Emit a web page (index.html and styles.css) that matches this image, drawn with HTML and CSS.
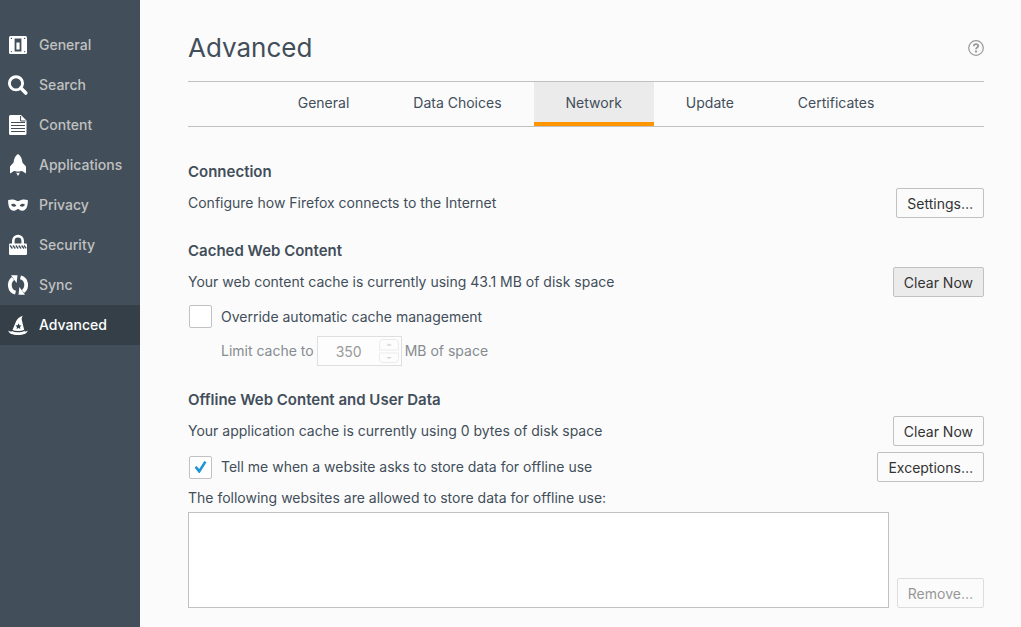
FILE: index.html
```html
<!DOCTYPE html>
<html lang="en">
<head>
<meta charset="utf-8">
<meta name="viewport" content="width=device-width, initial-scale=1">
<title>Advanced preferences</title>
<link rel="stylesheet" href="styles.css">
</head>
<body class="prefs">
<nav class="sidebar" aria-label="Categories">
  <a class="category" href="#general">
    <svg class="category-icon" viewBox="0 0 20 20"><rect x="1" y="1" width="18" height="18" rx="1.5" fill="#fff"/><path d="M7.5 4.500h5v11h-5z" fill="none" stroke="#424f5a" stroke-width="1.800"/><path d="M8 4.500h4v3H8z" fill="#424f5a"/><g fill="#424f5a"><circle cx="3.400" cy="3.400" r=".7"/><circle cx="16.600" cy="3.400" r=".7"/><circle cx="3.400" cy="16.600" r=".7"/><circle cx="16.600" cy="16.600" r=".7"/></g></svg>
    General</a>
  <a class="category" href="#search">
    <svg class="category-icon" viewBox="0 0 20 20" fill="none" stroke="#fff"><circle cx="8" cy="8.300" r="6.600" stroke-width="2.900"/><path d="M12.800 13l5 5" stroke-width="3.600" stroke-linecap="round"/></svg>
    Search</a>
  <a class="category" href="#content">
    <svg class="category-icon" viewBox="0 0 20 20"><path d="M2.500 0H13l5.500 5.500V18.500a1.500 1.500 0 0 1-1.500 1.500H2.500A1.500 1.500 0 0 1 1 18.500V1.500A1.500 1.500 0 0 1 2.500 0z" fill="#fff"/><path d="M12.600 1v5h5" fill="none" stroke="#424f5a"/><path d="M3 7.500h14M3 10.500h14M3 13.500h14M3 16.500h14" stroke="#424f5a" stroke-width="1.200"/></svg>
    Content</a>
  <a class="category" href="#applications">
    <svg class="category-icon" viewBox="0 0 20 20" fill="#fff"><path d="M10-1C7.300.8 5.800 4 5.600 7.500L2 11.500v7l4-2.500h8l4 2.500v-7l-3.600-4C14.200 4 12.700.8 10-1z"/><path d="M7.500 16.500h5L10 21z"/><path d="M8 17.600h4" stroke="#424f5a" stroke-width=".9"/></svg>
    Applications</a>
  <a class="category" href="#privacy">
    <svg class="category-icon" viewBox="0 0 20 20"><path d="M.2 5.100c2.500-.6 4.500-.7 6.500-.2 1.400.4 2.300 1.100 3.300 1.100s1.900-.7 3.300-1.100c2-.5 4-.4 6.500.2.3 5.500-1.300 10.700-5.500 10.700-2.400 0-3-1.800-4.300-1.800s-1.900 1.800-4.300 1.800c-4.200 0-5.800-5.200-5.500-10.700z" fill="#fff"/><path d="M3 9.700c1.500-1.500 4-1.200 5.300 1-1.600 1.500-4.200 1.300-5.300-1zM17 9.700c-1.500-1.500-4-1.200-5.300 1 1.600 1.500 4.200 1.300 5.300-1z" fill="#424f5a"/></svg>
    Privacy</a>
  <a class="category" href="#security">
    <svg class="category-icon" viewBox="0 0 20 20"><path d="M5.300 9V5.800a4.700 4.700 0 0 1 9.400 0V9" fill="none" stroke="#fff" stroke-width="2.600"/><rect x="1" y="8.500" width="18" height="11.500" rx="1.200" fill="#fff"/><path d="M2 10.500l2.400 3M4.900 10.500l2.400 3M7.800 10.500l2.400 3M10.700 10.500l2.400 3M13.600 10.500l2.400 3M16 10.500l2.200 2.800" stroke="#424f5a" stroke-width="1.300"/></svg>
    Security</a>
  <a class="category" href="#sync">
    <svg class="category-icon" viewBox="0 0 20 20"><path d="M7.500 17.600C1 16 0 7.500 5 3.500M12.500 2.400C19 4 20 12.500 15 16.500" fill="none" stroke="#fff" stroke-width="3.800"/><path d="M3 .3h6.500L8.600 8zM17 19.700h-6.500l.9-7.700z" fill="#fff"/></svg>
    Sync</a>
  <a class="category category-selected" href="#advanced" aria-current="page">
    <svg class="category-icon" viewBox="0 0 20 20"><path d="M.3 15.500c1.200 1 2.500 1.200 3.700.7L8 6.500C9 3.800 11.500 1.800 14.700.7c-.8 1.800-1.200 3-.9 4.300l2.700 11.200c1 .4 2 .2 3.200-.7-.5 3-4 4.500-9.700 4.500S.8 18.500.3 15.500z" fill="#fff"/><path d="M3.800 15.200c3 1.900 9.500 1.900 12.700 0" fill="none" stroke="#343f48" stroke-width="1.100"/><path d="M10.500 8.300l.9 1.900 2.100.2-1.500 1.500.4 2.100-1.900-1-1.900 1 .4-2.100-1.500-1.500 2.100-.2z" fill="#343f48"/></svg>
    Advanced</a>
</nav>
<main class="pane">
  <header class="pane-header">
    <h1 class="pane-title">Advanced</h1>
    <a class="help" href="#help" aria-label="Help">
      <svg class="help-icon" viewBox="0 0 16 16" fill="none" stroke="#999"><circle cx="8" cy="8" r="7.300" stroke-width="1.200"/><path d="M5.800 6.300c0-1.500 1-2.100 2.200-2.100s2.200.7 2.200 1.900c0 1.500-2.200 1.500-2.200 3.200" stroke-width="1.800"/><path d="M8 10.600v1.900" stroke-width="2"/></svg>
    </a>
  </header>
  <div class="tabs" role="tablist">
    <button class="tab" role="tab">General</button>
    <button class="tab" role="tab">Data Choices</button>
    <button class="tab tab-selected" role="tab" aria-selected="true">Network</button>
    <button class="tab" role="tab">Update</button>
    <button class="tab" role="tab">Certificates</button>
  </div>
  <section class="group">
    <h2 class="group-title">Connection</h2>
    <div class="row">
      <span>Configure how Firefox connects to the Internet</span>
      <button class="button">Settings…</button>
    </div>
  </section>
  <section class="group">
    <h2 class="group-title">Cached Web Content</h2>
    <div class="row">
      <span>Your web content cache is currently using 43.1 MB of disk space</span>
      <button class="button button-hover">Clear Now</button>
    </div>
    <label class="check check-override"><input class="checkbox" type="checkbox">Override automatic cache management</label>
    <div class="limit">
      <label for="cache-size">Limit cache to</label>
      <span class="number">
        <input class="number-input" id="cache-size" type="number" value="350" disabled>
        <svg class="spinner" viewBox="0 0 20 24" fill="none" stroke="#ebebeb"><path d="M.5 11V4A3.500 3.500 0 0 1 4 .5h12A3.500 3.500 0 0 1 19.500 4v7zM.5 14v6A3.500 3.500 0 0 0 4 23.500h12a3.500 3.500 0 0 0 3.500-3.500v-6z"/><path d="M7 6.500l3-2 3 2zM7 18l3 2 3-2z" fill="#d4d4d4" stroke="none"/></svg>
      </span>
      <span>MB of space</span>
    </div>
  </section>
  <section class="group group-offline">
    <h2 class="group-title">Offline Web Content and User Data</h2>
    <div class="row">
      <span>Your application cache is currently using 0 bytes of disk space</span>
      <button class="button">Clear Now</button>
    </div>
    <div class="row row-next">
      <label class="check"><input class="checkbox" type="checkbox" checked>Tell me when a website asks to store data for offline use</label>
      <button class="button">Exceptions…</button>
    </div>
    <label class="list-label" for="sites">The following websites are allowed to store data for offline use:</label>
    <div class="list-row">
      <select class="list" id="sites" size="5"></select>
      <button class="button" disabled>Remove…</button>
    </div>
  </section>
</main>
</body>
</html>
```
FILE: styles.css
```css
* {
  box-sizing: border-box;
}

.prefs {
  display: flex;
  min-height: 100vh;
  margin: 0;
  background: #fbfbfb;
  color: #424e5a;
  font: 14px/20px Inter, "Liberation Sans", sans-serif;
}

.sidebar {
  flex: none;
  width: 140px;
  padding-top: 25px;
  background: #424f5a;
}

.category {
  display: flex;
  align-items: center;
  gap: 11px;
  height: 40px;
  padding-left: 8px;
  color: #c1c1c1;
  font-weight: 500;
  text-decoration: none;
}

.category-selected {
  background: #343f48;
  color: #fff;
}

.category-icon {
  flex: none;
  width: 20px;
  height: 20px;
  overflow: visible;
}

.pane {
  flex: 1;
  min-width: 0;
  padding: 28px 37px 19px 48px;
}

.pane-header {
  display: flex;
  align-items: center;
  justify-content: space-between;
  margin-bottom: 13px;
}

.pane-title {
  margin: 0;
  font-size: 26px;
  font-weight: 400;
  line-height: 40px;
}

.help,
.help-icon {
  display: block;
  width: 16px;
  height: 16px;
}

.tabs {
  display: flex;
  justify-content: center;
  border: solid #c1c1c1;
  border-width: 1px 0;
}

.tab {
  padding: 2px 32px 0;
  border: 0;
  border-bottom: 4px solid transparent;
  background: none;
  color: inherit;
  font: inherit;
  line-height: 38px;
}

.tab-selected {
  border-color: #ff9500;
  background: #ebebeb;
}

.group {
  margin-top: 23px;
}

.tabs + .group {
  margin-top: 35px;
}

.group-offline {
  margin-top: 24px;
}

.group-title {
  margin: 0 0 6px;
  font-size: 15px;
  font-weight: 600;
  line-height: 20px;
}

.row {
  display: flex;
  align-items: center;
  justify-content: space-between;
}

.row-next {
  margin-top: 6px;
}

.button {
  height: 30px;
  padding: 2px 10px 0;
  border: 1px solid #c1c1c1;
  border-radius: 2px;
  background: #fbfbfb;
  color: #333;
  font: inherit;
}

.button-hover {
  background: #ebebeb;
}

.button:disabled {
  opacity: 0.5;
}

.check {
  display: flex;
  align-items: center;
  gap: 9px;
  padding-left: 1px;
}

.check-override {
  margin: 8px 0;
}

.checkbox {
  appearance: none;
  display: grid;
  place-items: center;
  width: 23px;
  height: 23px;
  margin: 0;
  border: 1px solid #c1c1c1;
  border-radius: 2px;
  background: #fff;
}

.checkbox:checked::before {
  content: "";
  width: 12px;
  height: 12px;
  background: #1e94d9;
  clip-path: polygon(0 54%, 17% 42%, 39% 67%, 82% 0, 100% 10%, 44% 100%, 36% 100%);
}

.limit {
  display: flex;
  align-items: center;
  gap: 3px;
  padding-left: 33px;
  color: #868b90;
}

.number {
  display: flex;
  align-items: center;
  width: 85px;
  height: 30px;
  padding-right: 2px;
  border: 1px solid #dedede;
  background: #fdfdfd;
}

.number-input {
  appearance: textfield;
  flex: 1;
  min-width: 0;
  padding: 2px 0 0 16px;
  border: 0;
  background: none;
  color: #999;
  font: inherit;
  text-align: center;
}

.spinner {
  flex: none;
  width: 20px;
  height: 24px;
}

.list-label {
  display: block;
  margin: 6px 0 4px;
}

.list-row {
  display: flex;
  align-items: flex-end;
  gap: 8px;
}

.list {
  flex: 1;
  min-width: 0;
  height: 96px;
  border: 1px solid #c1c1c1;
  border-radius: 0;
  background: #fff;
}
```
